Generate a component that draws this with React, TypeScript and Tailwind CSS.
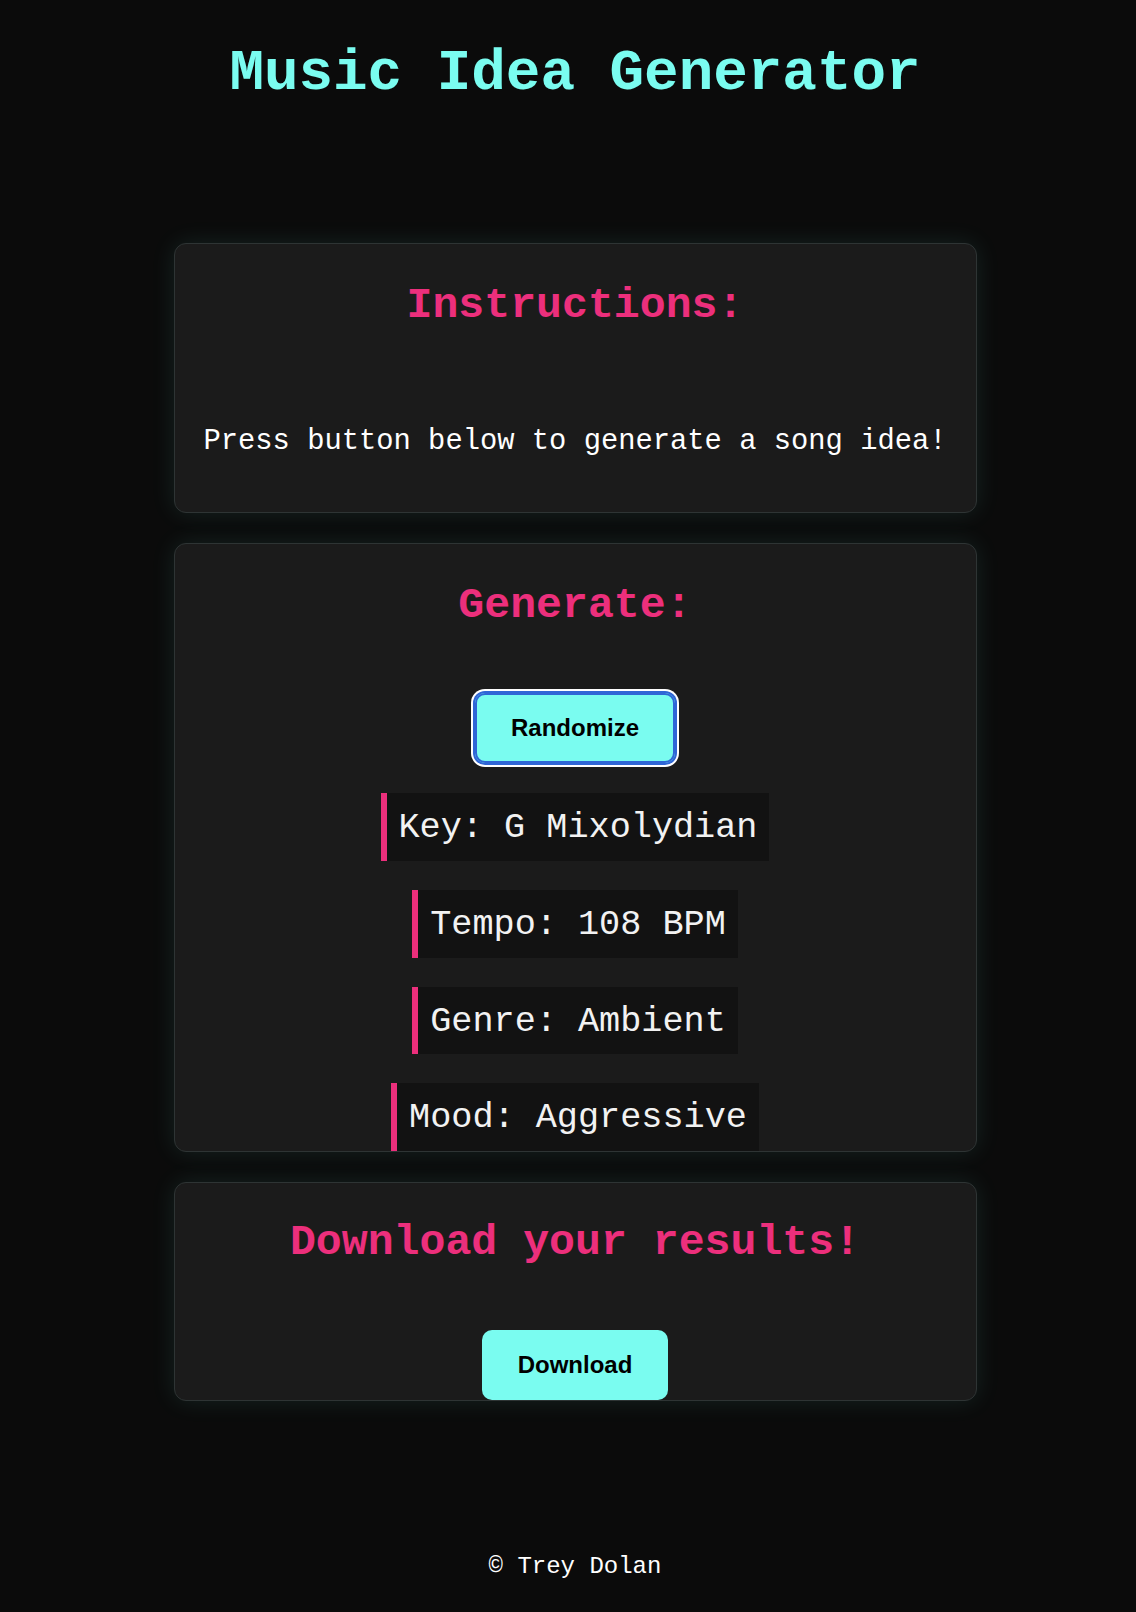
import React from "react";

const PINK = "text-[#ec2f7c]";

function Card({ children, className = "" }: { children: React.ReactNode; className?: string }) {
  return (
    <section
      className={
        "flex w-[803px] flex-col items-center rounded-xl border border-[#2e3434] bg-[#1b1b1b] shadow-[0_0_24px_rgba(122,252,240,0.1)] " +
        className
      }
    >
      {children}
    </section>
  );
}

function Result({ text }: { text: string }) {
  return (
    <div className="border-l-[6px] border-[#ec2f7c] bg-[#121212] px-[12px] pt-[16px] pb-[12px] text-[35.2px] leading-[1.133] text-[#f2f2f2] whitespace-pre">
      {text}
    </div>
  );
}

export default function App() {
  const results = ["Key: G Mixolydian", "Tempo: 108 BPM", "Genre: Ambient", "Mood: Aggressive"];
  return (
    <div className="min-h-[1612px] bg-[#0b0b0b] pl-[14px] font-['Liberation_Mono','Courier_New',monospace] text-white">
      <h1 className="pt-[41px] text-center text-[57.6px] font-bold leading-[1.133] text-[#7afcf0]">
        Music Idea Generator
      </h1>
      <main className="mt-[137px] flex flex-col items-center gap-[30px]">
        <Card>
          <h2 className={"mt-[38px] text-center text-[43.2px] font-bold leading-[1.133] " + PINK}>Instructions:</h2>
          <p className="mt-[95px] mb-[53px] text-center text-[28.8px] leading-[1.133] text-white">
            Press button below to generate a song idea!
          </p>
        </Card>
        <Card>
          <h2 className={"mt-[38px] text-center text-[43.2px] font-bold leading-[1.133] " + PINK}>Generate:</h2>
          <button className="mt-[62px] flex h-[70px] items-center justify-center rounded-[10px] bg-[#7afcf0] px-[36px] font-['Liberation_Sans',Arial,sans-serif] text-[24px] font-bold text-black shadow-[inset_0_0_0_2px_#2f66d6,0_0_0_2px_#2f66d6,0_0_0_4px_#ffffff]">
            Randomize
          </button>
          <div className="mt-[30px] flex flex-col items-center gap-[29px]">
            {results.map((r) => (
              <Result key={r} text={r} />
            ))}
          </div>
        </Card>
        <Card>
          <h2 className={"mt-[36px] text-center text-[43.2px] font-bold leading-[1.133] " + PINK}>
            Download your results!
          </h2>
          <button className="mt-[62px] flex h-[70px] items-center justify-center rounded-[10px] bg-[#7afcf0] px-[36px] font-['Liberation_Sans',Arial,sans-serif] text-[24px] font-bold text-black">
            Download
          </button>
        </Card>
      </main>
      <footer className="mt-[152px] text-center text-[24px] leading-[1.133] text-white">© Trey Dolan</footer>
    </div>
  );
}
